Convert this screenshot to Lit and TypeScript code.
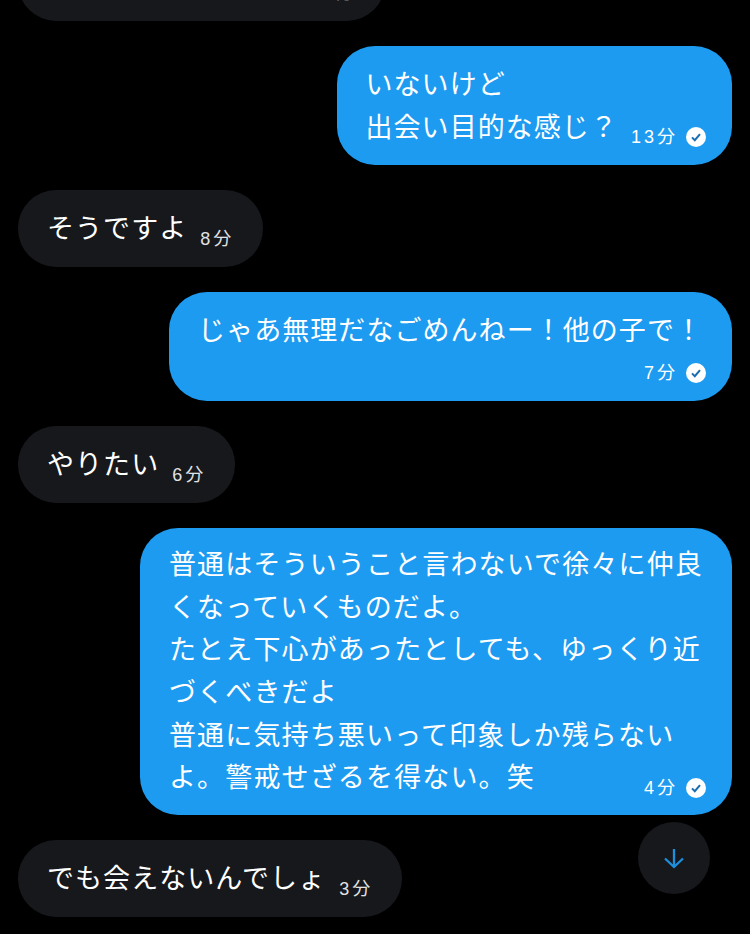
import { LitElement, html, css, svg } from "lit"
import { customElement } from "lit/decorators.js"

type Message = {
    mine: boolean
    lines: string[]
    time: string
    // the time sits on its own row instead of closing the last line
    metaBelow?: boolean
}

const messages: Message[] = [
    // scrolled off the top, only the bubble's lower edge shows
    { mine: false, lines: ["\u3000\u3000\u3000\u3000\u3000\u3000\u3000\u3000\u3000"], time: "15分" },
    { mine: true, lines: ["いないけど", "出会い目的な感じ？"], time: "13分" },
    { mine: false, lines: ["そうですよ"], time: "8分" },
    { mine: true, lines: ["じゃあ無理だなごめんねー！他の子で！"], time: "7分", metaBelow: true },
    { mine: false, lines: ["やりたい"], time: "6分" },
    {
        mine: true,
        lines: [
            "普通はそういうこと言わないで徐々に仲良",
            "くなっていくものだよ。",
            "たとえ下心があったとしても、ゆっくり近",
            "づくべきだよ",
            "普通に気持ち悪いって印象しか残らない",
            "よ。警戒せざるを得ない。笑",
        ],
        time: "4分",
    },
    { mine: false, lines: ["でも会えないんでしょ"], time: "3分" },
]

const checkIcon = svg`
    <svg class="check" viewBox="0 0 20 20">
        <circle cx="10" cy="10" r="10" fill="#fff"></circle>
        <path d="M6 10.4l2.8 2.8 5.2-6" fill="none" stroke="#1a6db0" stroke-width="2"></path>
    </svg>
`

@customElement("app-root")
export class AppRoot extends LitElement {
    static styles = css`
        :host {
            display: block;
            height: 934px;
            overflow: hidden;
            position: relative;
            background: #000;
            color: #fff;
            font-family: "Liberation Sans", "Noto Sans CJK JP", sans-serif;
        }

        .thread {
            display: flex;
            flex-direction: column;
            gap: 25px;
            margin-top: -56px;
            padding: 0 18px;
        }

        .bubble {
            box-sizing: border-box;
            min-height: 77px;
            padding: 18px 29px 16px;
            border-radius: 38px;
            font-size: 27px;
            letter-spacing: 1.05px;
            line-height: 42.6px;
            white-space: nowrap;
        }

        .tall {
            padding-top: 16px;
            padding-bottom: 15.4px;
            letter-spacing: 1.15px;
        }

        .theirs {
            align-self: flex-start;
            background: #16181c;
        }

        .mine {
            align-self: flex-end;
            background: #1d9bf0;
        }

        .last {
            display: flex;
            align-items: flex-end;
        }

        .meta {
            display: flex;
            align-items: center;
            gap: 8px;
            margin-left: auto;
            margin-bottom: 2px;
            padding-left: 13px;
            font-size: 18px;
            letter-spacing: 3px;
            line-height: 20px;
            color: #e0e2e3;
        }

        .bubble:first-child .meta {
            padding-left: 10px;
        }

        .mine .meta {
            color: #fff;
            margin-right: -3px;
        }

        .below {
            justify-content: flex-end;
            margin-top: 10px;
            margin-bottom: 2.4px;
        }

        .check {
            width: 20px;
            height: 20px;
            flex: none;
        }

        .scroll-down {
            position: absolute;
            left: 638px;
            top: 822px;
            width: 72px;
            height: 72px;
            border-radius: 50%;
            background: #16181c;
            display: flex;
            align-items: center;
            justify-content: center;
        }

        .scroll-down svg {
            width: 24px;
            height: 24px;
        }
    `

    renderMeta(m: Message, below = false) {
        return html`
            <div class="meta ${below ? "below" : ""}">
                <span>${m.time}</span>
                ${m.mine ? checkIcon : ""}
            </div>
        `
    }

    renderBubble(m: Message) {
        const head = m.metaBelow ? m.lines : m.lines.slice(0, -1)
        const tall = m.lines.length > 2 ? "tall" : ""
        return html`
            <div class="bubble ${m.mine ? "mine" : "theirs"} ${tall}">
                ${head.map(line => html`<div>${line}</div>`)}
                ${m.metaBelow
                    ? this.renderMeta(m, true)
                    : html`<div class="last"><span>${m.lines[m.lines.length - 1]}</span>${this.renderMeta(m)}</div>`}
            </div>
        `
    }

    render() {
        return html`
            <div class="thread">${messages.map(m => this.renderBubble(m))}</div>
            <div class="scroll-down">
                <svg viewBox="0 0 24 24" fill="none" stroke="#1d8fdd" stroke-width="2.3">
                    <path d="M12 3v17.5M3 12.5l9 8.5 9-8.5"></path>
                </svg>
            </div>
        `
    }
}
